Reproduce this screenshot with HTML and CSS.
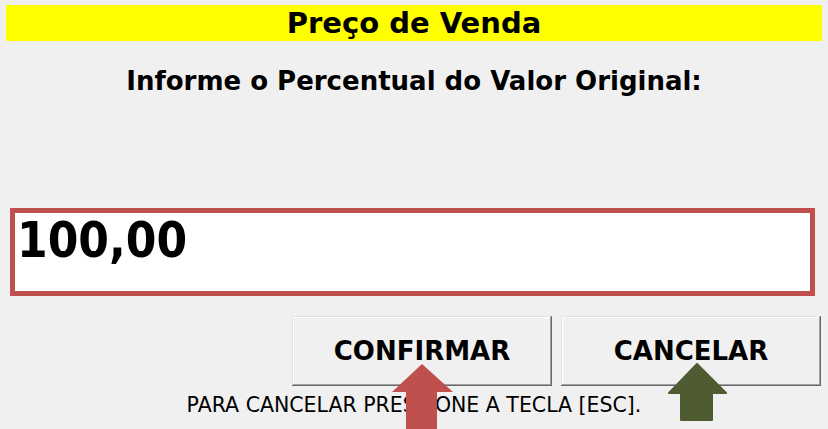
FILE: index.html
```html
<!DOCTYPE html>
<html lang="pt">
<head>
<meta charset="utf-8">
<title>Preço de Venda</title>
<link rel="stylesheet" href="styles.css">
</head>
<body>
<div class="dialog">
  <div class="title-bar">Preço de Venda</div>
  <div class="prompt">Informe o Percentual do Valor Original:</div>
  <div class="value-box">100,00</div>
  <div class="actions">
    <button class="btn" type="button">CONFIRMAR</button>
    <button class="btn" type="button">CANCELAR</button>
  </div>
  <div class="hint">PARA CANCELAR PRESSIONE A TECLA [ESC].</div>

  <svg class="arrow arrow-red" width="62" height="66" viewBox="0 0 62 66" aria-hidden="true">
    <path d="M30 0 L61 28 L45 28 L45 66 L14 66 L14 28 L0 28 Z" fill="#c0504d"/>
  </svg>
  <svg class="arrow arrow-green" width="60" height="59" viewBox="0 0 60 59" aria-hidden="true">
    <path d="M29 1 L58 30 L44 30 L44 57 L13 57 L13 30 L1 30 Z" fill="#4f5b31" stroke="#4f5b31" stroke-width="2" stroke-linejoin="round"/>
  </svg>
</div>
</body>
</html>
```

FILE: styles.css
```css
html, body {
  margin: 0;
  padding: 0;
  background: #f0f0f0;
}

.dialog {
  position: relative;
  width: 828px;
  height: 429px;
  overflow: hidden;
  padding-top: 5px;
  box-sizing: border-box;
  font-family: "DejaVu Sans", Verdana, sans-serif;
  color: #000;
}

.title-bar {
  margin: 0 6px 0 6px;
  height: 36px;
  background: #ffff00;
  text-align: center;
  font-weight: bold;
  font-size: 29px;
  line-height: 36px;
}

.prompt {
  margin-top: 25px;
  text-align: center;
  font-weight: bold;
  font-size: 26px;
  line-height: 30px;
}

.value-box {
  margin-top: 112px;
  margin-left: 10px;
  width: 805px;
  height: 88px;
  box-sizing: border-box;
  border: 5px solid #c0504d;
  background: #fff;
  padding: 3px 0 0 2px;
  font-family: "DejaVu Sans Condensed", "DejaVu Sans", sans-serif;
  font-weight: bold;
  font-size: 49px;
  line-height: 49px;
}

.actions {
  margin-top: 20px;
  display: flex;
  justify-content: flex-end;
  gap: 9px;
  padding-right: 7px;
}

.btn {
  width: 260px;
  height: 70px;
  margin: 0;
  padding: 0;
  border: none;
  background: #f0f0f0;
  box-shadow: inset -1px -1px 0 #696969, inset 1px 1px 0 #e3e3e3, inset -2px -2px 0 #a0a0a0, inset 2px 2px 0 #ffffff;
  font-family: "DejaVu Sans", Verdana, sans-serif;
  font-weight: bold;
  font-size: 26px;
  color: #000;
}

.hint {
  margin-top: 7px;
  text-align: center;
  font-size: 20.5px;
  line-height: 24px;
}

.arrow {
  position: absolute;
  display: block;
}

.arrow-red {
  left: 392px;
  top: 364px;
}

.arrow-green {
  left: 668px;
  top: 363px;
}
```
